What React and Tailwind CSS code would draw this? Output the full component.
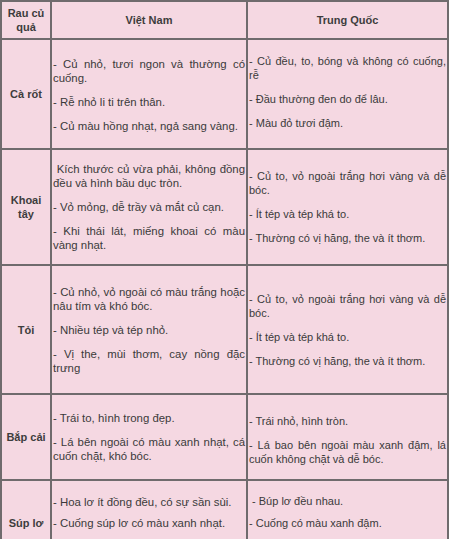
import React from "react";

const font = { fontFamily: '"Liberation Sans", Arial, sans-serif' };

function Cell({ children, className = "" }) {
  return (
    <div className={"bg-[#f5d8e2] flex items-center " + className}>
      <div className="w-full">{children}</div>
    </div>
  );
}

function Label({ children }) {
  return (
    <div className="bg-[#f5d8e2] flex items-center justify-center text-center font-bold text-[11px] leading-[14px] text-[#3d3d3d] px-[2px]">
      {children}
    </div>
  );
}

function Paras({ items, gap = "mt-[10px]", className = "", wide = false }) {
  return (
    <div
      className={
        "leading-[14px] text-[#3a3a3a] text-justify px-[1px] " +
        (wide ? "text-[11.4px] " : "text-[11px] ") +
        className
      }
    >
      {items.map((t, i) => (
        <p key={i} className={i === 0 ? "" : gap}>
          {t}
        </p>
      ))}
    </div>
  );
}

export default function App() {
  return (
    <div className="w-[450px] h-[539px] overflow-hidden bg-white" style={font}>
      <div className="grid grid-cols-[48px_194px_199px] grid-rows-[36px_108px_114px_127px_84px_84px] gap-[2px] p-[2px] bg-[#6f6b6d] w-[449px]">
        <Label>
          Rau củ
          <br />
          quả
        </Label>
        <Label>Việt Nam</Label>
        <Label>Trung Quốc</Label>

        <Label>Cà rốt</Label>
        <Cell>
          <Paras
            wide
            className="mt-[2px]"
            items={[
              "- Củ nhỏ, tươi ngon và thường có cuống.",
              "- Rễ nhỏ li ti trên thân.",
              "- Củ màu hồng nhạt, ngả sang vàng.",
            ]}
          />
        </Cell>
        <Cell>
          <Paras
            className="-mt-[4px]"
            items={[
              "- Củ đều, to, bóng và không có cuống, rễ",
              "- Đầu thường đen do để lâu.",
              "- Màu đỏ tươi đậm.",
            ]}
          />
        </Cell>

        <Label>
          Khoai
          <br />
          tây
        </Label>
        <Cell>
          <Paras
            wide
            items={[
              "\u00a0Kích thước củ vừa phải, không đồng đều và hình bầu dục tròn.",
              "- Vỏ mỏng, dễ trầy và mắt củ cạn.",
              "- Khi thái lát, miếng khoai có màu vàng nhạt.",
            ]}
          />
        </Cell>
        <Cell>
          <Paras
            items={[
              "- Củ to, vỏ ngoài trắng hơi vàng và dễ bóc.",
              "- Ít tép và tép khá to.",
              "- Thường có vị hăng, the và ít thơm.",
            ]}
          />
        </Cell>

        <Label>Tỏi</Label>
        <Cell>
          <Paras
            wide
            items={[
              "- Củ nhỏ, vỏ ngoài có màu trắng hoặc nâu tím và khó bóc.",
              "- Nhiều tép và tép nhỏ.",
              "- Vị the, mùi thơm, cay nồng đặc trưng",
            ]}
          />
        </Cell>
        <Cell>
          <Paras
            items={[
              "- Củ to, vỏ ngoài trắng hơi vàng và dễ bóc.",
              "- Ít tép và tép khá to.",
              "- Thường có vị hăng, the và ít thơm.",
            ]}
          />
        </Cell>

        <Label>Bắp cải</Label>
        <Cell>
          <Paras
            wide
            items={[
              "- Trái to, hình trong đẹp.",
              "- Lá bên ngoài có màu xanh nhạt, cá cuốn chặt, khó bóc.",
            ]}
          />
        </Cell>
        <Cell>
          <Paras
            className="mt-[6px]"
            items={[
              "- Trái nhỏ, hình tròn.",
              "- Lá bao bên ngoài màu xanh đậm, lá cuốn không chặt và dễ bóc.",
            ]}
          />
        </Cell>

        <Label>Súp lơ</Label>
        <div className="bg-[#f5d8e2] pt-[14px]">
          <Paras
            wide
            gap="mt-[7px]"
            items={["- Hoa lơ ít đồng đều, có sự sần sùi.", "- Cuống súp lơ có màu xanh nhạt."]}
          />
        </div>
        <div className="bg-[#f5d8e2] pt-[13px]">
          <Paras
            gap="mt-[8px]"
            items={["\u00a0- Búp lơ đều nhau.", "- Cuống có màu xanh đậm."]}
          />
        </div>
      </div>
    </div>
  );
}
